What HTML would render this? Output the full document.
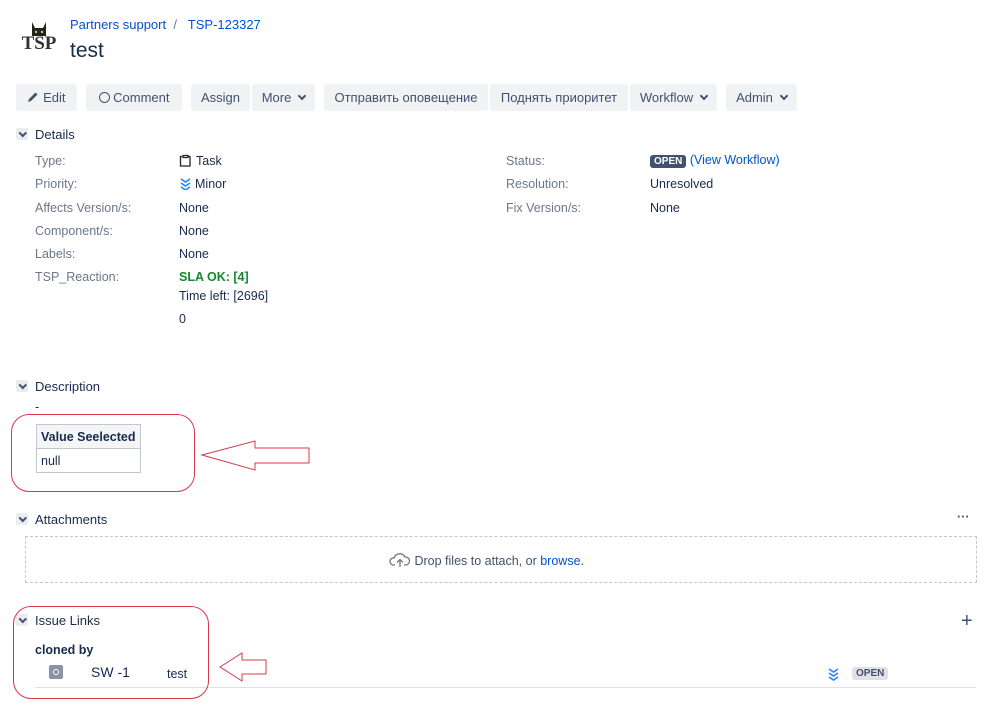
<!DOCTYPE html>
<html><head><meta charset="utf-8"><style>
body{margin:0;width:999px;height:719px;background:#fff;font-family:"Liberation Sans","Noto Sans CJK SC",sans-serif;font-size:12.5px;color:#172b4d;position:relative;overflow:hidden}
.a{position:absolute;white-space:nowrap}
.btn{position:absolute;top:84px;height:27px;background:#f1f2f4;border-radius:3px;line-height:27px;font-size:13px;color:#42526e;text-align:center}
.lbl{color:#6b778c}
.chev{position:absolute;width:12px;height:12px;background:#ebecf0;border-radius:2px}
.chev:after{content:"";position:absolute;left:3.5px;top:2px;width:3.5px;height:3.5px;border-right:2px solid #42526e;border-bottom:2px solid #42526e;transform:rotate(45deg)}
.sec{font-size:13px;color:#172b4d}
.dd:after{content:"";display:inline-block;width:4px;height:4px;border-right:2px solid #42526e;border-bottom:2px solid #42526e;transform:rotate(45deg);margin-left:8px;position:relative;top:-3px}
a{color:#0052cc;text-decoration:none}
</style></head><body>
<svg class="a" style="left:17px;top:18px" width="44" height="36" viewBox="0 0 44 36">
<path d="M15 4 L18 10 L26 10 L29 4 L29 18 L15 18Z" fill="#222"/>
<circle cx="19" cy="14" r="1.2" fill="#cc3"/><circle cx="25" cy="14" r="1.2" fill="#cc3"/>
<text x="22" y="31" font-family="Liberation Serif" font-weight="bold" font-size="19" text-anchor="middle" fill="#333">TSP</text></svg>
<div class="a" style="left:70px;top:17px;font-size:13px"><a>Partners support</a><span style="color:#6b778c">&nbsp;&nbsp;/&nbsp;&nbsp;&nbsp;</span><a>TSP-123327</a></div>
<div class="a" style="left:70px;top:39px;font-size:21px;color:#172b4d">test</div>

<div class="btn" style="left:16px;width:61px"><svg width="12" height="12" viewBox="0 0 12 12" style="vertical-align:-1px"><path d="M1 11 L2 8 L8.5 1.5 L10.5 3.5 L4 10Z" fill="#42526e"/></svg> Edit</div>
<div class="btn" style="left:86px;width:96px"><span style="display:inline-block;width:9px;height:9px;border:1.5px solid #42526e;border-radius:50%;vertical-align:-1px"></span> Comment</div>
<div class="btn" style="left:191px;width:59px">Assign</div>
<div class="btn dd" style="left:252px;width:63px">More</div>
<div class="btn" style="left:324px;width:164px">Отправить оповещение</div>
<div class="btn" style="left:490px;width:138px">Поднять приоритет</div>
<div class="btn dd" style="left:630px;width:87px">Workflow</div>
<div class="btn dd" style="left:726px;width:71px">Admin</div>

<div class="chev" style="left:16px;top:128px"></div>
<div class="a sec" style="left:35px;top:127px">Details</div>
<div class="a lbl" style="left:35px;top:154px">Type:</div>
<div class="a" style="left:179px;top:154px"><svg width="13" height="13" viewBox="0 0 13 13" style="vertical-align:-2px;margin-right:4px"><path d="M3 2.5 H1.5 V12 H11 V2.5 H9.5 M4 1.5 H9 V3.5 H4Z" fill="none" stroke="#222" stroke-width="1.3"/></svg>Task</div>
<div class="a lbl" style="left:35px;top:177px">Priority:</div>
<div class="a" style="left:179px;top:177px"><svg width="13" height="13" viewBox="0 0 13 13" style="vertical-align:-2px;margin-right:3px"><path d="M2 2 L6.5 5 L11 2 M2 6 L6.5 9 L11 6 M2 10 L6.5 13 L11 10" fill="none" stroke="#2684ff" stroke-width="1.6"/></svg>Minor</div>
<div class="a lbl" style="left:35px;top:201px">Affects Version/s:</div><div class="a" style="left:179px;top:201px">None</div>
<div class="a lbl" style="left:35px;top:224px">Component/s:</div><div class="a" style="left:179px;top:224px">None</div>
<div class="a lbl" style="left:35px;top:247px">Labels:</div><div class="a" style="left:179px;top:247px">None</div>
<div class="a lbl" style="left:35px;top:270px">TSP_Reaction:</div>
<div class="a" style="left:179px;top:270px;color:#14892c;font-weight:bold">SLA OK: [4]</div>
<div class="a" style="left:179px;top:289px">Time left: [2696]</div>
<div class="a" style="left:179px;top:312px">0</div>

<div class="a lbl" style="left:506px;top:154px">Status:</div>
<div class="a" style="left:650px;top:153px"><span style="background:#42526e;color:#fff;font-weight:bold;font-size:10px;padding:1px 4px;border-radius:3px">OPEN</span> <a>(View Workflow)</a></div>
<div class="a lbl" style="left:506px;top:177px">Resolution:</div><div class="a" style="left:650px;top:177px">Unresolved</div>
<div class="a lbl" style="left:506px;top:201px">Fix Version/s:</div><div class="a" style="left:650px;top:201px">None</div>

<div class="chev" style="left:16px;top:380px"></div>
<div class="a sec" style="left:35px;top:379px">Description</div>
<div class="a" style="left:35px;top:400px">-</div>
<table class="a" style="left:36px;top:424px;border-collapse:collapse;font-size:12.5px">
<tr><th style="background:#f4f5f7;border:1px solid #c1c7d0;padding:3px 4px;text-align:left;height:17px">Value Seelected</th></tr>
<tr><td style="border:1px solid #c1c7d0;padding:3px 4px;height:17px">null</td></tr></table>
<div class="a" style="left:11px;top:414px;width:182px;height:76px;border:1px solid #d8384a;border-radius:18px"></div>
<svg class="a" style="left:200px;top:438px" width="112" height="34"><path d="M2 17 L55 3 L55 10 L109 10 L109 25 L55 25 L55 32 Z" fill="none" stroke="#d8384a" stroke-width="1"/></svg>

<div class="chev" style="left:16px;top:513px"></div>
<div class="a sec" style="left:35px;top:512px">Attachments</div>
<div class="a" style="left:957px;top:510px;font-weight:bold;color:#42526e">···</div>
<div class="a" style="left:25px;top:536px;width:950px;height:45px;border:1px dashed #c1c7d0"></div>
<div class="a" style="left:389px;top:552px;color:#42526e"><svg width="22" height="16" viewBox="0 0 22 16" style="vertical-align:-3px"><path d="M6 13 H4 A3.5 3.5 0 0 1 5 6 A6 6 0 0 1 16 5 A4 4 0 0 1 17 13 H15 M11 15 V8 M8 10.5 L11 7.5 L14 10.5" fill="none" stroke="#6b778c" stroke-width="1.3"/></svg> Drop files to attach, or <a>browse.</a></div>

<div class="chev" style="left:16px;top:614px"></div>
<div class="a sec" style="left:35px;top:613px">Issue Links</div>
<div class="a" style="left:961px;top:610px;font-size:20px;color:#42526e">+</div>
<div class="a" style="left:35px;top:643px;font-weight:bold;color:#172b4d">cloned by</div>
<div class="a" style="left:49px;top:665px;width:14px;height:14px;background:#8993a4;border-radius:2px"><div style="position:absolute;left:4px;top:4px;width:4px;height:4px;border:1.2px solid #fff;border-radius:50%"></div></div>
<div class="a" style="left:91px;top:664px;font-size:14px">SW -1</div>
<div class="a" style="left:167px;top:667px">test</div>
<svg class="a" style="left:827px;top:667px" width="13" height="14" viewBox="0 0 13 14"><path d="M2 2 L6.5 5 L11 2 M2 6 L6.5 9 L11 6 M2 10 L6.5 13 L11 10" fill="none" stroke="#2684ff" stroke-width="1.6"/></svg>
<div class="a" style="left:852px;top:667px;background:#dfe1e6;color:#42526e;font-size:10px;font-weight:bold;padding:1px 4px;border-radius:3px">OPEN</div>
<div class="a" style="left:35px;top:687px;width:941px;height:1px;background:#dfe1e6"></div>
<div class="a" style="left:13px;top:606px;width:194px;height:91px;border:1px solid #d8384a;border-radius:18px"></div>
<svg class="a" style="left:218px;top:651px" width="52" height="32"><path d="M2 16 L24 2 L24 9 L48 9 L48 23 L24 23 L24 30 Z" fill="none" stroke="#d8384a" stroke-width="1"/></svg>
</body></html>
